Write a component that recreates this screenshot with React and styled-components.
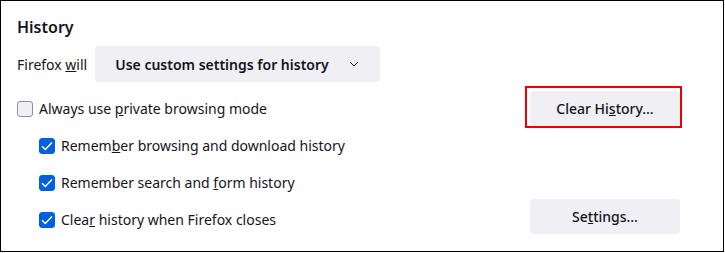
import styled, { createGlobalStyle } from "styled-components";

const GlobalStyle = createGlobalStyle`
  html, body {
    margin: 0;
    padding: 0;
    background: #fff;
  }
  body {
    font-family: "Noto Sans", "Open Sans", sans-serif;
    color: #15141a;
  }
`;

const Frame = styled.div`
  box-sizing: border-box;
  width: 724px;
  height: 252px;
  border: 1px solid #000;
  padding: 14px 0 0 16px;
`;

const Heading = styled.h2`
  margin: 0;
  font-size: 16px;
  font-weight: 600;
  line-height: 24px;
`;

const SelectRow = styled.div`
  display: flex;
  align-items: center;
  gap: 8px;
  margin-top: 7px;
  font-size: 14px;
`;

const Select = styled.button`
  display: flex;
  align-items: center;
  gap: 20px;
  height: 36px;
  padding: 0 21px 0 20px;
  border: none;
  border-radius: 4px;
  background: #f0f0f4;
  color: inherit;
  font: inherit;
  font-weight: 600;
`;

const Main = styled.div`
  display: grid;
  grid-template-columns: 513px 150px;
  grid-template-rows: repeat(4, 37px);
  margin-top: 8px;
`;

const Row = styled.label`
  display: flex;
  align-items: center;
  gap: 6px;
  padding-left: ${(p) => (p.$indent ? "22px" : "0")};
  font-size: 14px;
  grid-column: 1;
`;

const Box = styled.span`
  box-sizing: border-box;
  width: 16px;
  height: 16px;
  border-radius: 3px;
  display: flex;
  align-items: center;
  justify-content: center;
  background: ${(p) => (p.$checked ? "#0061e0" : "#f0f0f4")};
  border: 1px solid ${(p) => (p.$checked ? "#0061e0" : "#8f8f9d")};
`;

const ButtonSlot = styled.div`
  grid-column: 2;
  grid-row: ${(p) => p.$row};
  align-self: center;
  position: relative;
  margin-top: ${(p) => p.$shift || 0}px;
`;

const Button = styled.button`
  width: 150px;
  height: 35px;
  border: none;
  border-radius: 4px;
  background: #f0f0f4;
  color: inherit;
  font: inherit;
  font-size: 14px;
  font-weight: 500;
`;

const Highlight = styled.span`
  position: absolute;
  left: -5px;
  top: -5px;
  right: -2px;
  bottom: -2px;
  border: 2px solid #ec0000;
  pointer-events: none;
`;

const Check = () => (
  <svg width="12" height="10" viewBox="0 0 12 10">
    <path d="M1 5.2 L4.3 8.4 L11 1.4" fill="none" stroke="#fff" strokeWidth="1.5" />
  </svg>
);

const Checkbox = ({ checked, indent, children }) => (
  <Row $indent={indent}>
    <Box $checked={checked}>{checked && <Check />}</Box>
    <span>{children}</span>
  </Row>
);

export default function App() {
  return (
    <>
      <GlobalStyle />
      <Frame>
        <Heading>History</Heading>
        <SelectRow>
          <span>
            Firefox <u>w</u>ill
          </span>
          <Select>
            Use custom settings for history
            <svg width="10" height="6" viewBox="0 0 10 6">
              <path d="M1 1 L5 5 L9 1" fill="none" stroke="#15141a" strokeWidth="1" />
            </svg>
          </Select>
        </SelectRow>
        <Main>
          <Checkbox>
            Always use <u>p</u>rivate browsing mode
          </Checkbox>
          <Checkbox checked indent>
            Remem<u>b</u>er browsing and download history
          </Checkbox>
          <Checkbox checked indent>
            Remember search and <u>f</u>orm history
          </Checkbox>
          <Checkbox checked indent>
            Clea<u>r</u> history when Firefox closes
          </Checkbox>
          <ButtonSlot $row={1}>
            <Button>
              Clear Hi<u>s</u>tory…
            </Button>
            <Highlight />
          </ButtonSlot>
          <ButtonSlot $row={4} $shift={-6}>
            <Button>
              Se<u>t</u>tings…
            </Button>
          </ButtonSlot>
        </Main>
      </Frame>
    </>
  );
}
